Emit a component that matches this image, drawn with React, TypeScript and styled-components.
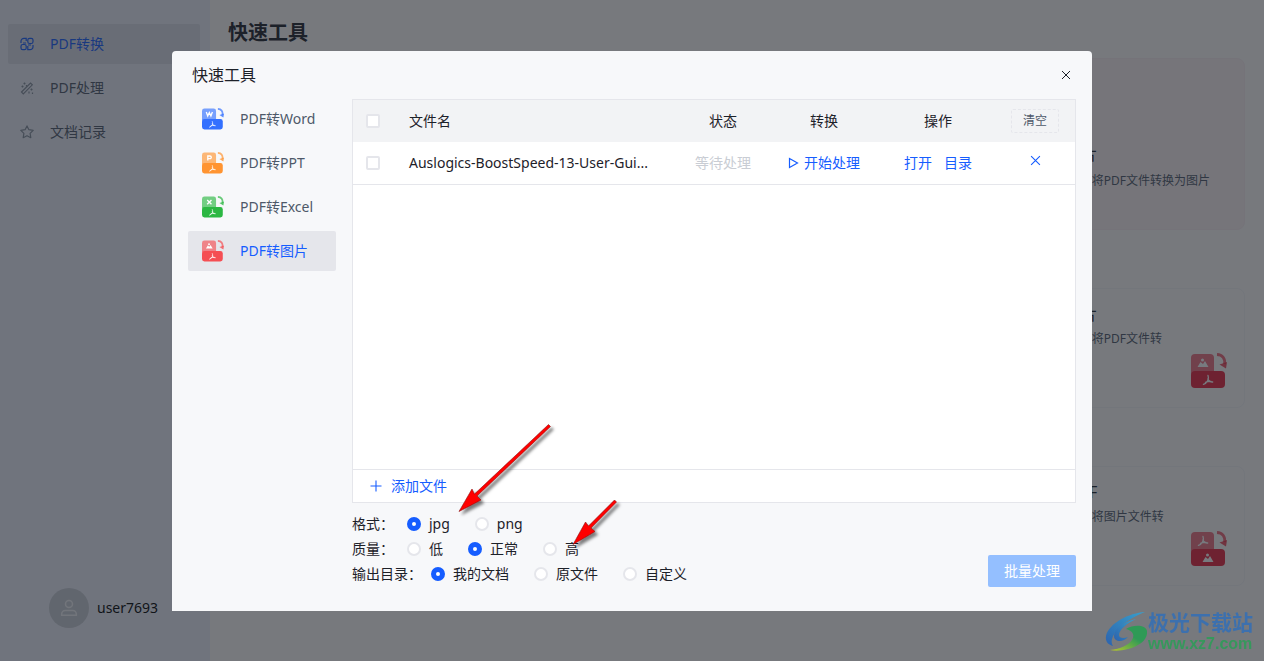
import React from 'react';
import styled, { createGlobalStyle, css } from 'styled-components';

const GlobalStyle = createGlobalStyle`
  *, *::before, *::after { box-sizing: border-box; }
  body {
    margin: 0;
    font: 14px/22px "Noto Sans", "Noto Sans CJK SC", sans-serif;
    color: #1d2129;
    background: #fff;
  }
  button, input { font: inherit; color: inherit; }
  button { border: 0; padding: 0; background: none; cursor: pointer; }
  a { color: inherit; text-decoration: none; }
  h1, h2, h3, p { margin: 0; }
`;

const Page = styled.div`
  display: flex;
  height: 100vh;
  overflow: hidden;
`;

const Sidebar = styled.aside`
  display: flex;
  flex-direction: column;
  flex: 0 0 210px;
  padding: 24px 10px 33px 8px;
  background: #edf0fb;
`;

const Menu = styled.nav`
  display: flex;
  flex-direction: column;
  gap: 4px;
`;

const MenuLink = styled.a<{ $active?: boolean }>`
  display: flex;
  align-items: center;
  gap: 16px;
  height: 40px;
  padding: 0 12px;
  border-radius: 2px;
  color: #4e5969;
  svg { flex: none; color: #86909c; }
  ${(p) => p.$active && css`
    background: #dcdfe8;
    color: #165dff;
    svg { color: #165dff; }
  `}
`;

const Account = styled.div`
  display: flex;
  align-items: center;
  gap: 8px;
  margin-top: auto;
  padding-left: 41px;
  color: #000;
`;

const Avatar = styled.span`
  display: grid;
  place-items: center;
  width: 40px;
  height: 40px;
  border-radius: 50%;
  background: #c9cdd4;
  color: #f2f3f5;
`;

const Main = styled.main`
  flex: 1;
  min-width: 0;
  padding: 19px 19px 0 18px;
  background: #fffdfb;
`;

const PageTitle = styled.h1`
  font-size: 20px;
  line-height: 28px;
  font-weight: 700;
`;

const CardRow = styled.section`
  display: grid;
  grid-template-columns: repeat(4, 1fr);
  gap: 16px;
  margin-top: 58px;
  &:first-of-type { margin-top: 11px; }
`;

const Card = styled.article<{ $featured?: boolean }>`
  display: flex;
  flex-direction: column;
  gap: ${(p) => (p.$featured ? 4 : 2)}px;
  grid-column: 4;
  height: ${(p) => (p.$featured ? 172 : 120)}px;
  padding: ${(p) => (p.$featured ? 82 : 12)}px 17px 16px 16px;
  border: 1px solid ${(p) => (p.$featured ? '#faeef0' : '#f5f5f6')};
  border-radius: 8px;
  background: ${(p) => (p.$featured ? '#fdf2f3' : 'transparent')};
  h3 { font-size: 16px; line-height: 26px; font-weight: 400; }
  p { font-size: 12px; line-height: 20px; color: #4e5969; max-width: ${(p) => (p.$featured ? 200 : 150)}px; }
  svg { align-self: flex-end; margin-top: -18px; flex: none; }
`;

const Overlay = styled.div`
  position: fixed;
  inset: 0;
  display: grid;
  place-items: center;
  background: rgba(29, 33, 41, 0.6);
`;

const Dialog = styled.div`
  position: relative;
  width: 920px;
  max-width: 100%;
  border-radius: 4px 4px 0 0;
  background: #f7f8fa;
`;

const DialogHeader = styled.header`
  display: flex;
  align-items: center;
  justify-content: space-between;
  height: 48px;
  padding: 0 20px;
  h2 { font-size: 16px; line-height: 24px; font-weight: 400; }
`;

const IconButton = styled.button`
  display: grid;
  place-items: center;
  width: 12px;
  height: 12px;
`;

const DialogBody = styled.div`
  display: flex;
  gap: 16px;
  padding: 0 16px 24px;
`;

const ToolNav = styled.nav`
  display: flex;
  flex-direction: column;
  flex: 0 0 148px;
  gap: 4px;
`;

const ToolLink = styled(MenuLink)`
  padding: 0 14px;
  ${(p) => p.$active && css`background: #e5e6eb;`}
`;

const Panel = styled.div`
  flex: 1;
  min-width: 0;
`;

const FileBox = styled.div`
  display: flex;
  flex-direction: column;
  min-height: 404px;
  border: 1px solid #e5e6eb;
  background: #fff;
`;

const Table = styled.table`
  width: 100%;
  table-layout: fixed;
  border-collapse: collapse;
  th, td { height: 42px; padding: 0; text-align: center; font-weight: 400; }
  th { background: #f2f3f5; }
  td { height: 43px; border-bottom: 1px solid #e5e6eb; }
`;

const Col = styled.col<{ $width?: number }>`
  width: ${(p) => (p.$width ? `${p.$width}px` : 'auto')};
`;

const NameText = styled.div`
  padding: 0 16px;
  text-align: left;
  white-space: nowrap;
  overflow: hidden;
`;

const CheckBox = styled.input`
  display: block;
  appearance: none;
  width: 14px;
  height: 14px;
  margin: 0 auto;
  border: 2px solid #e5e6eb;
  border-radius: 2px;
  background: #fff;
`;

const Waiting = styled.span`
  color: #c9cdd4;
`;

const Actions = styled.div`
  display: flex;
  align-items: center;
  justify-content: center;
  gap: 12px;
`;

const LinkButton = styled.button`
  display: inline-flex;
  align-items: center;
  gap: 5px;
  color: #165dff;
`;

const EndCell = styled.div`
  display: flex;
  padding-left: 10px;
`;

const ClearButton = styled.button`
  width: 48px;
  height: 24px;
  border: 1px dashed #e5e6eb;
  border-radius: 2px;
  font-size: 12px;
  line-height: 20px;
  color: #4e5969;
`;

const RemoveButton = styled.button`
  display: grid;
  place-items: center;
  width: 48px;
  height: 24px;
  padding-bottom: 4px;
  color: #165dff;
`;

const AddBar = styled.div`
  display: flex;
  align-items: center;
  height: 33px;
  margin-top: auto;
  padding: 0 16px;
  border-top: 1px solid #e5e6eb;
  ${LinkButton} { gap: 8px; }
`;

const Footer = styled.footer`
  display: flex;
  align-items: flex-end;
  justify-content: space-between;
  margin-top: 9px;
`;

const OptionRow = styled.div<{ $labelWidth: number }>`
  display: flex;
  align-items: center;
  height: 25px;
  > span { min-width: ${(p) => p.$labelWidth}px; }
`;

const RadioLabel = styled.label`
  display: flex;
  align-items: center;
  gap: 8px;
  margin-right: 20px;
  padding-left: 5px;
`;

const Radio = styled.input`
  appearance: none;
  width: 14px;
  height: 14px;
  margin: 0;
  border: 2px solid #e5e6eb;
  border-radius: 50%;
  background: #fff;
  &:checked { border: 5px solid #165dff; }
`;

const PrimaryButton = styled.button`
  height: 32px;
  padding: 0 16px;
  border-radius: 2px;
  background: #94bfff;
  color: #fff;
`;

const Pointers = styled.svg`
  position: absolute;
  left: 280px;
  top: 368px;
  pointer-events: none;
`;

const Watermark = styled.div`
  position: fixed;
  right: 11px;
  bottom: 7px;
  display: flex;
  align-items: center;
  gap: 1px;
`;

const WatermarkText = styled.div`
  display: flex;
  flex-direction: column;
  font-weight: 700;
  color: #3c70ae;
  font-size: 21px;
  line-height: 24px;
  small {
    font: 700 16px/20px "Liberation Sans", sans-serif;
    color: #36985c;
  }
`;

type Glyph = 'W' | 'P' | 'X' | 'image' | 'pdf';

const PdfMark = () => (
  <path d="M0-4.600c.9 2.300 .3 4.400-.4 5.500-.9 1.500-2.600 3-4.200 3.500M-.1-1.200c.7 2 2.200 3.300 4.800 3.200M-2.600 2.300c1.800-.7 3.600-1 5.600-.9" fill="none" stroke="#fff" strokeWidth="1.300" strokeLinecap="round" />
);

const PictureMark = () => (
  <g fill="#fff">
    <path d="M-5.500 4 L-2.500-1 L0 1 L2-2 L5.500 4Z" />
    <circle cx="-.5" cy="-3" r="1.500" />
  </g>
);

const LETTERS: Record<'W' | 'P' | 'X', string> = {
  W: 'M-5-3.500 L-2.600 3 L0-2.500 L2.600 3 L5-3.500',
  P: 'M-2.500 4 V-3.500 H1 a2.200 2.200 0 0 1 0 4.400 H-2.500',
  X: 'M-3.500-3.500 L3.500 3.500 M3.500-3.500 L-3.500 3.500',
};

const Mark = ({ glyph }: { glyph: Glyph }) => {
  if (glyph === 'pdf') return <PdfMark />;
  if (glyph === 'image') return <PictureMark />;
  return <path d={LETTERS[glyph]} fill="none" stroke="#fff" strokeWidth="2.200" />;
};

const ConvertIcon = ({ size, color, top, bottom = 'pdf' }: { size: number; color: string; top: Glyph; bottom?: Glyph }) => (
  <svg width={size} height={size} viewBox="0 0 36 36">
    <rect x="0" y="1" width="23" height="22" rx="4" fill={color} opacity="0.65" />
    <rect x="0" y="18" width="34" height="17" rx="4" fill={color} />
    <path d="M26 1.500c5.500 .2 8.500 4 7.500 9.500" fill="none" stroke={color} strokeWidth="2.800" opacity="0.7" />
    <path d="M28.500 11.500 L36 9 L35 15.500Z" fill={color} opacity="0.8" />
    <g transform="translate(12 10)"><Mark glyph={top} /></g>
    <g transform="translate(17 27)"><Mark glyph={bottom} /></g>
  </svg>
);

const SwapIcon = () => (
  <svg width="14" height="14" viewBox="0 0 14 14" fill="none" stroke="currentColor" strokeWidth="1.200">
    <rect x="1" y="7.500" width="5.200" height="5.200" rx="1.800" />
    <rect x="7.800" y="1.300" width="5.200" height="5.200" rx="1.800" />
    <path d="M1 6V4.300a3 3 0 0 1 3-3h2.200V4M13 8v1.700a3 3 0 0 1-3 3H7.800V9M3 6h3M8 8h3" />
  </svg>
);

const WandIcon = () => (
  <svg width="14" height="14" viewBox="0 0 14 14" fill="none" stroke="currentColor" strokeWidth="1.200">
    <path d="M1.500 11 L10.500 2 L12.300 3.800 L3.300 12.800Z" />
    <path d="M2.500 4.500v2M1.500 5.500h2M4.500 1.500v2M3.500 2.500h2M6.500 4v1.500M11.500 7.500v2M10.500 8.500h2M9 10.500v2M12.500 11.500v1.500" />
  </svg>
);

const StarIcon = () => (
  <svg width="14" height="14" viewBox="0 0 14 14" fill="none" stroke="currentColor" strokeWidth="1.200" strokeLinejoin="round">
    <path d="M7 .9 8.900 4.700 13.200 5.400 10.100 8.400 10.800 12.700 7 10.700 3.200 12.700 3.900 8.400 .8 5.400 5.100 4.700Z" />
  </svg>
);

const UserIcon = () => (
  <svg width="18" height="18" viewBox="0 0 18 18" fill="none" stroke="currentColor" strokeWidth="1.500">
    <circle cx="9" cy="5" r="3.500" />
    <path d="M1.700 16.300V15a3.500 3.500 0 0 1 3.500-3.500h7.600a3.500 3.500 0 0 1 3.500 3.500v1.300Z" />
  </svg>
);

const CrossIcon = ({ size }: { size: number }) => (
  <svg width={size} height={size} viewBox="0 0 10 10" fill="none" stroke="currentColor" strokeWidth="1">
    <path d="M1 1 9 9M9 1 1 9" />
  </svg>
);

const PlayIcon = () => (
  <svg width="11" height="12" viewBox="0 0 11 12" fill="none" stroke="currentColor" strokeWidth="1.200">
    <path d="M1.500 1.500 9.500 6 1.500 10.500Z" />
  </svg>
);

const PlusIcon = () => (
  <svg width="14" height="14" viewBox="0 0 14 14" fill="none" stroke="currentColor" strokeWidth="1.100">
    <path d="M7 1.500v11M1.500 7h11" />
  </svg>
);

const menu = [
  { label: 'PDF转换', icon: <SwapIcon />, active: true },
  { label: 'PDF处理', icon: <WandIcon /> },
  { label: '文档记录', icon: <StarIcon /> },
];

const tools: { label: string; color: string; glyph: Glyph; active?: boolean }[] = [
  { label: 'PDF转Word', color: '#3370ff', glyph: 'W' },
  { label: 'PDF转PPT', color: '#ff9431', glyph: 'P' },
  { label: 'PDF转Excel', color: '#2bb742', glyph: 'X' },
  { label: 'PDF转图片', color: '#f54e53', glyph: 'image', active: true },
];

const options = [
  { name: 'format', label: '格式：', width: 50, values: ['jpg', 'png'], selected: 'jpg' },
  { name: 'quality', label: '质量：', width: 50, values: ['低', '正常', '高'], selected: '正常' },
  { name: 'output', label: '输出目录：', width: 74, values: ['我的文档', '原文件', '自定义'], selected: '我的文档' },
];

export default function App() {
  return (
    <>
      <GlobalStyle />
      <Page>
        <Sidebar>
          <Menu>
            {menu.map((m) => (
              <MenuLink key={m.label} href="#" $active={m.active}>{m.icon}{m.label}</MenuLink>
            ))}
          </Menu>
          <Account><Avatar><UserIcon /></Avatar>user7693</Account>
        </Sidebar>
        <Main>
          <PageTitle>快速工具</PageTitle>
          <CardRow>
            <Card $featured>
              <h3>PDF转图片</h3>
              <p>可以一键快速将PDF文件转换为图片</p>
            </Card>
          </CardRow>
          <CardRow>
            <Card>
              <h3>PDF转图片</h3>
              <p>可以一键快速将PDF文件转换为图片</p>
              <ConvertIcon size={36} color="#e8253c" top="image" />
            </Card>
          </CardRow>
          <CardRow>
            <Card>
              <h3>图片转PDF</h3>
              <p>可以一键快速将图片文件转换为PDF</p>
              <ConvertIcon size={36} color="#e8253c" top="pdf" bottom="image" />
            </Card>
          </CardRow>
        </Main>
      </Page>

      <Overlay>
        <Dialog role="dialog" aria-labelledby="dialog-title">
          <DialogHeader>
            <h2 id="dialog-title">快速工具</h2>
            <IconButton aria-label="关闭"><CrossIcon size={10} /></IconButton>
          </DialogHeader>
          <DialogBody>
            <ToolNav>
              {tools.map((t) => (
                <ToolLink key={t.label} href="#" $active={t.active}>
                  <ConvertIcon size={22} color={t.color} top={t.glyph} />
                  {t.label}
                </ToolLink>
              ))}
            </ToolNav>
            <Panel>
              <FileBox>
                <Table>
                  <colgroup>
                    <Col $width={40} /><Col /><Col $width={100} /><Col $width={102} /><Col $width={126} /><Col $width={74} />
                  </colgroup>
                  <thead>
                    <tr>
                      <th><CheckBox type="checkbox" aria-label="全选" /></th>
                      <th><NameText>文件名</NameText></th>
                      <th>状态</th>
                      <th>转换</th>
                      <th>操作</th>
                      <th><EndCell><ClearButton>清空</ClearButton></EndCell></th>
                    </tr>
                  </thead>
                  <tbody>
                    <tr>
                      <td><CheckBox type="checkbox" aria-label="选择文件" /></td>
                      <td><NameText>Auslogics-BoostSpeed-13-User-Gui...</NameText></td>
                      <td><Waiting>等待处理</Waiting></td>
                      <td><Actions><LinkButton><PlayIcon />开始处理</LinkButton></Actions></td>
                      <td><Actions><LinkButton>打开</LinkButton><LinkButton>目录</LinkButton></Actions></td>
                      <td><EndCell><RemoveButton aria-label="移除"><CrossIcon size={11} /></RemoveButton></EndCell></td>
                    </tr>
                  </tbody>
                </Table>
                <AddBar><LinkButton><PlusIcon />添加文件</LinkButton></AddBar>
              </FileBox>
              <Footer>
                <div>
                  {options.map((o) => (
                    <OptionRow key={o.name} $labelWidth={o.width} role="radiogroup" aria-label={o.label}>
                      <span>{o.label}</span>
                      {o.values.map((v) => (
                        <RadioLabel key={v}>
                          <Radio type="radio" name={o.name} defaultChecked={v === o.selected} />
                          {v}
                        </RadioLabel>
                      ))}
                    </OptionRow>
                  ))}
                </div>
                <PrimaryButton>批量处理</PrimaryButton>
              </Footer>
            </Panel>
          </DialogBody>
          <Pointers width="176" height="136" viewBox="0 0 176 136" aria-hidden="true">
            <defs>
              <filter id="shade" x="-20%" y="-20%" width="150%" height="150%">
                <feDropShadow dx="3" dy="3" stdDeviation="1.500" floodOpacity="0.5" />
              </filter>
            </defs>
            <g fill="#f00" stroke="#8a1010" strokeWidth="0.600" filter="url(#shade)">
              <path d="M96.500 5.500 L98.500 7.500 L25 77 L29 81 L7 92.500 L20 70 L22.500 75Z" />
              <path d="M162.500 81 L164.500 83 L139 109 L143 112.500 L121 125.500 L133.500 103 L136.500 107Z" />
            </g>
          </Pointers>
        </Dialog>
      </Overlay>

      <Watermark>
        <svg width="42" height="42" viewBox="0 0 42 42">
          <defs>
            <linearGradient id="wave" x1="0" y1="1" x2="1" y2="0">
              <stop offset="0" stopColor="#2c62ae" /><stop offset="1" stopColor="#38a0cc" />
            </linearGradient>
            <linearGradient id="leaf" x1="0" y1="1" x2="1" y2="0">
              <stop offset="0" stopColor="#b9c72c" /><stop offset="0.600" stopColor="#2f9a56" />
            </linearGradient>
          </defs>
          <path d="M40 1C24 2 4 12 1 25c-1 6 3 9 7 10-3-4-1-11 6-18C21 10 30 5 40 1Z" fill="url(#wave)" />
          <path d="M31 8C18 11 9 18 9 25c0 6 9 7 14 1-5 2-9 1-9-2 0-5 8-12 17-16Z" fill="url(#wave)" />
          <path d="M5 39c10-1 19-5 22-10 3-5 1-9-6-11 8-5 20-4 21 2 1 8-7 15-19 18-7 2-13 2-18 1Z" fill="url(#leaf)" />
        </svg>
        <WatermarkText>极光下载站<small>www.xz7.com</small></WatermarkText>
      </Watermark>
    </>
  );
}
